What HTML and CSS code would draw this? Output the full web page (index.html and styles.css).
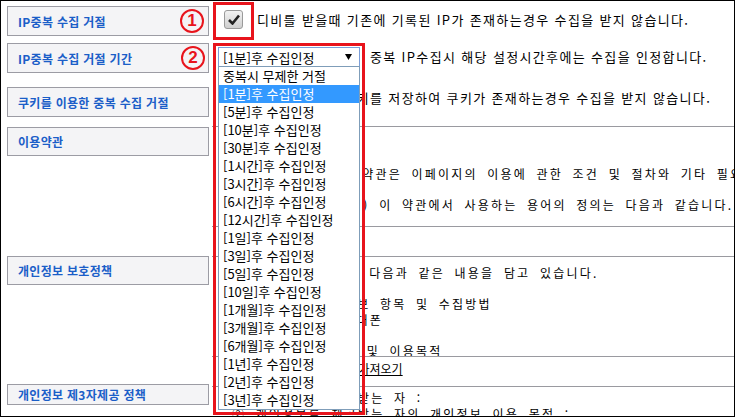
FILE: index.html
```html
<!DOCTYPE html>
<html lang="ko">
<head>
  <meta charset="UTF-8">
  <title>수집 설정</title>
  <link rel="stylesheet" href="styles.css">
</head>
<body>
  <div class="page">
    <div class="form">
      <div class="label r1"><span class="tag">IP중복 수집 거절</span></div>
      <div class="value v1">
        <span class="check">
          <svg width="12" height="11" viewBox="0 0 12 11"><path d="M1 6 L4.5 9.5 L11 1.5" fill="none" stroke="#222" stroke-width="2.6"/></svg>
        </span>
        <span class="desc">디비를 받을때 기존에 기록된 IP가 존재하는경우 수집을 받지 않습니다.</span>
      </div>

      <div class="label r2"><span class="tag">IP중복 수집 거절 기간</span></div>
      <div class="value v2">
        <div class="select">
          <span>[1분]후 수집인정</span>
          <svg class="caret" width="7" height="6" viewBox="0 0 7 6"><path d="M0 0 H7 L3.5 6 Z" fill="#000"/></svg>
          <ul class="options">
            <li>중복시 무제한 거절</li>
            <li class="on">[1분]후 수집인정</li>
            <li>[5분]후 수집인정</li>
            <li>[10분]후 수집인정</li>
            <li>[30분]후 수집인정</li>
            <li>[1시간]후 수집인정</li>
            <li>[3시간]후 수집인정</li>
            <li>[6시간]후 수집인정</li>
            <li>[12시간]후 수집인정</li>
            <li>[1일]후 수집인정</li>
            <li>[3일]후 수집인정</li>
            <li>[5일]후 수집인정</li>
            <li>[10일]후 수집인정</li>
            <li>[1개월]후 수집인정</li>
            <li>[3개월]후 수집인정</li>
            <li>[6개월]후 수집인정</li>
            <li>[1년]후 수집인정</li>
            <li>[2년]후 수집인정</li>
            <li>[3년]후 수집인정</li>
          </ul>
        </div>
        <span class="desc">중복 IP수집시 해당 설정시간후에는 수집을 인정합니다.</span>
      </div>

      <div class="label r3"><span class="tag">쿠키를 이용한 중복 수집 거절</span></div>
      <div class="value v3">
        <span class="check"></span>
        <span class="desc">방문자 PC에 쿠키를 저장하여 쿠키가 존재하는경우 수집을 받지 않습니다.</span>
      </div>

      <div class="label r4"><span class="tag">이용약관</span></div>
      <div class="value memo memo-terms">
        제1장 총칙<br>
        <br>
        제1조 (목적) 이 약관은 이페이지의 이용에 관한 조건 및 절차와 기타 필요한 사항을 규정함을 목적으로 합니다.<br>
        <br>
        제2조(용어의 정의) 이 약관에서 사용하는 용어의 정의는 다음과 같습니다.
      </div>

      <div class="label"></div>
      <div class="value line"></div>

      <div class="label r6"><span class="tag">개인정보 보호정책</span></div>
      <div class="value memo memo-privacy">
        개인정보 보호정책은 다음과 같은 내용을 담고 있습니다.<br>
        <br>
        1. 수집하는 개인정보 항목 및 수집방법<br>
        - 이름, 아이디, 휴대폰<br>
        <br>
        2. 개인정보의 수집 및 이용목적
      </div>

      <div class="label"></div>
      <div class="value line load"><a href="#">표준 개인정보 보호정책 가져오기</a></div>

      <div class="label r8"><span class="tag">개인정보 제3자제공 정책</span></div>
      <div class="value memo memo-third">
        ① 개인정보를 제공받는 자 :<br>
        ② 개인정보를 제공받는 자의 개인정보 이용 목적 :
      </div>
    </div>

    <!-- annotations -->
    <span class="mark mark-1">1</span>
    <span class="mark mark-2">2</span>
    <span class="frame frame-1"></span>
    <span class="frame frame-2"></span>
  </div>
</body>
</html>
```

FILE: styles.css
```css
body {
  margin: 0;
  background: #fff;
  font-family: "Noto Sans CJK KR", "Liberation Sans", sans-serif;
  color: #000;
}

.page {
  position: relative;
  box-sizing: border-box;
  width: 735px;
  height: 417px;
  border: 1px solid #000;
  overflow: hidden;
}

.form {
  display: grid;
  grid-template-columns: 211px 1fr;
  grid-template-rows: 39px 40px 46px 100px 30px 100px 30px 30px;
}

/* left labels */
.label {
  padding-left: 6px;
}

.tag {
  box-sizing: border-box;
  display: flex;
  align-items: center;
  width: 202px;
  height: 30px;
  padding-left: 10px;
  border: 1px solid #9c9ca4;
  background: #f4f4f6;
  color: #1b5ec8;
  font-size: 12px;
  font-weight: bold;
  letter-spacing: 0.3px;
  white-space: nowrap;
}

.r1 .tag { margin-top: 5px; }
.r2 .tag { margin-top: 3px; }
.r3 .tag { margin-top: 7px; }
.r4 .tag { margin-top: 1px; height: 29px; }
.r6 .tag { margin-top: 0; height: 29px; }
.r8 .tag { margin-top: -2px; height: 21px; }

/* right values */
.value {
  display: flex;
  align-items: center;
  min-width: 0;
  white-space: nowrap;
  overflow: hidden;
}

.desc {
  font-size: 13px;
  letter-spacing: 1.35px;
  line-height: 16px;
}

.check {
  box-sizing: border-box;
  display: flex;
  align-items: center;
  justify-content: center;
  width: 19px;
  height: 19px;
  border: 1px solid #9a9a9a;
  border-radius: 3px;
  background: linear-gradient(#f2f2f2, #cfcfcf);
}

.v1 {
  padding-left: 12px;
  padding-bottom: 2px;
  gap: 14px;
}

.v2 {
  align-items: flex-start;
  padding: 7px 0 0 6px;
  gap: 10px;
  overflow: visible;
}

.v2 .desc {
  line-height: 20px;
}

.v3 {
  padding-left: 16px;
  padding-bottom: 10px;
  gap: 14px;
}

/* select box */
.select {
  position: relative;
  box-sizing: border-box;
  display: flex;
  align-items: center;
  justify-content: space-between;
  width: 142px;
  height: 20px;
  padding: 0 7px 0 4px;
  border: 1px solid #7b9ed9;
  background: #fff;
  font-size: 13px;
  z-index: 2;
}

.options {
  position: absolute;
  left: -1px;
  top: 18px;
  box-sizing: border-box;
  width: 142px;
  margin: 0;
  padding: 0;
  list-style: none;
  border: 1px solid #7f9db9;
  background: #fff;
}

.options li {
  height: 18px;
  line-height: 18px;
  padding-left: 4px;
  font-size: 13px;
}

.options li.on {
  background: #3399ff;
  color: #fff;
}

/* memo rows */
.line,
.memo {
  border-top: 1px solid #9a9aa0;
}

.memo {
  display: block;
  box-sizing: border-box;
  padding-top: 8px;
  padding-left: 18px;
  font-size: 12px;
  line-height: 15.5px;
  letter-spacing: 2.2px;
  word-spacing: 4px;
}

.memo-terms { padding-left: 34px; }
.memo-privacy { padding-left: 19px; }
.memo-third { padding-top: 3px; padding-left: 20px; }

.load {
  align-items: flex-start;
  padding: 4px 0 0 26px;
}

.load a {
  color: #000;
  font-size: 12px;
  line-height: 15.5px;
}

/* red annotations */
.mark {
  position: absolute;
  box-sizing: border-box;
  display: flex;
  align-items: center;
  justify-content: center;
  width: 24px;
  height: 24px;
  border: 2px solid #e8141c;
  border-radius: 50%;
  color: #e8141c;
  font-family: "Liberation Sans", Arial, sans-serif;
  font-size: 17px;
  font-weight: bold;
  z-index: 3;
}

.mark-1 { left: 179px; top: 8px; }
.mark-2 { left: 180px; top: 45px; }

.frame {
  position: absolute;
  box-sizing: border-box;
  border: 3px solid #e8141c;
  z-index: 3;
}

.frame-1 { left: 212px; top: 1px; width: 41px; height: 38px; }
.frame-2 { left: 212px; top: 42px; width: 152px; height: 372px; }
```
